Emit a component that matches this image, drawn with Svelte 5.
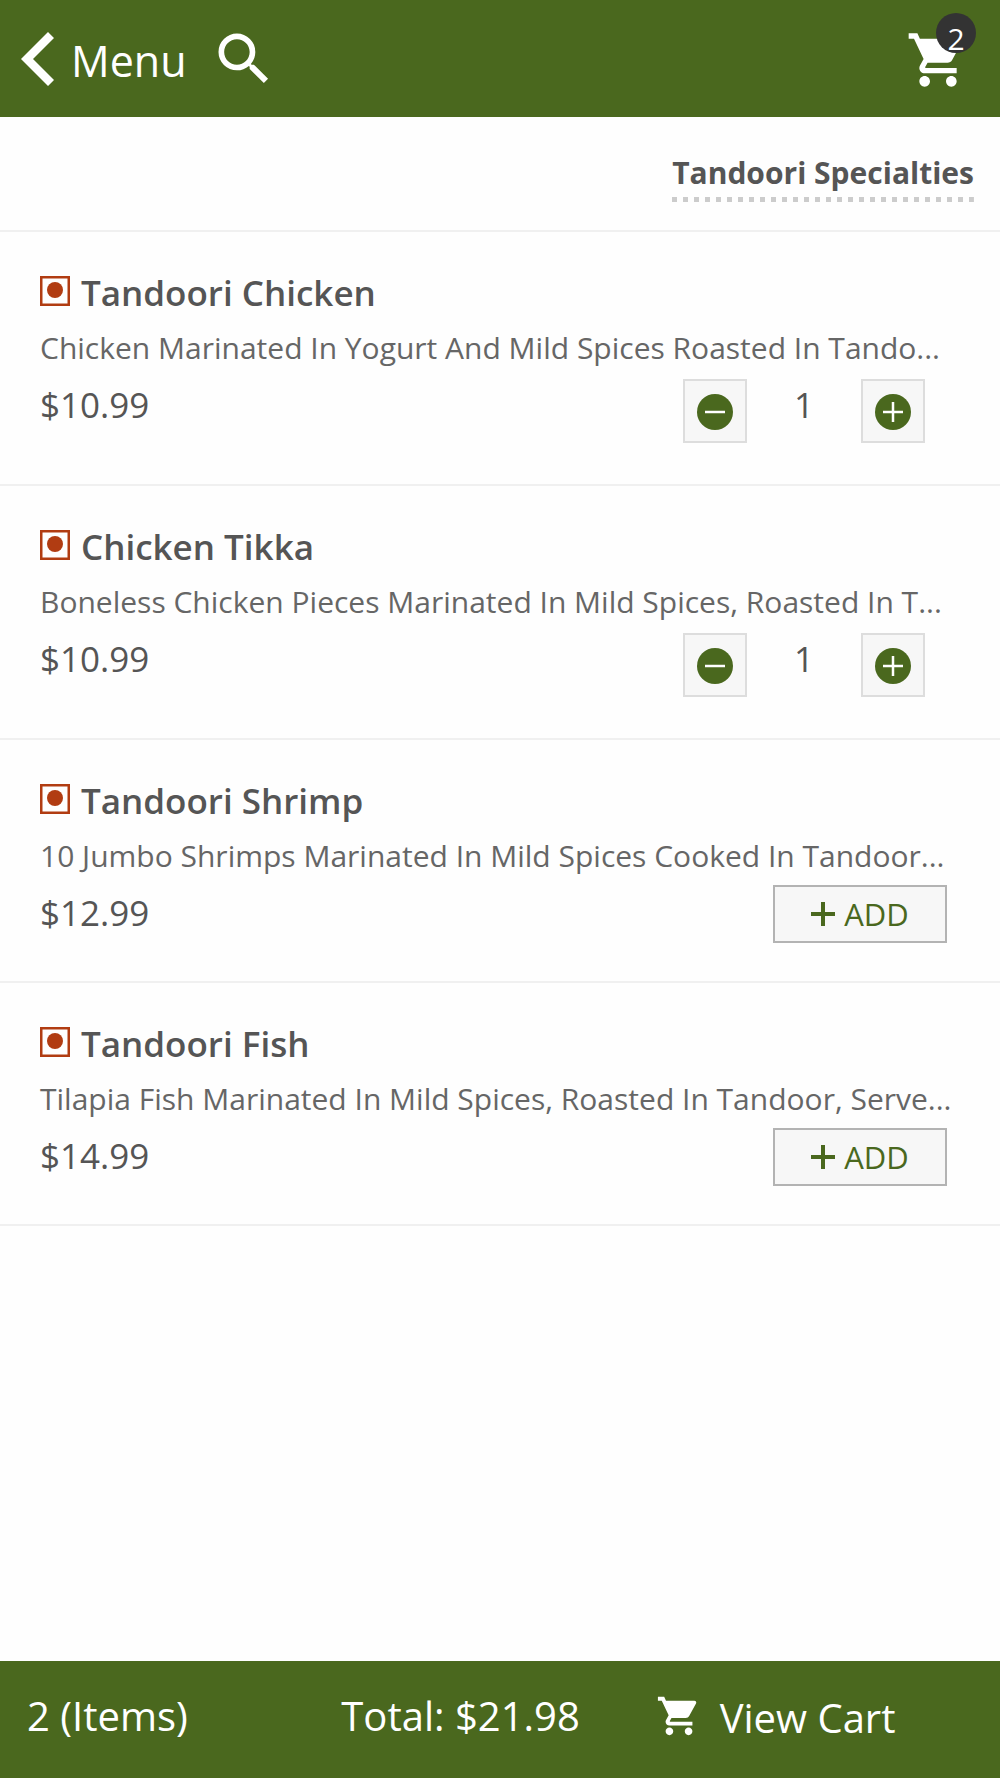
<script lang="ts">
	type Item = { name: string; description: string; price: number; quantity: number };

	let items = $state<Item[]>([
		{
			name: 'Tandoori Chicken',
			description: 'Chicken Marinated In Yogurt And Mild Spices Roasted In Tando...',
			price: 10.99,
			quantity: 1
		},
		{
			name: 'Chicken Tikka',
			description: 'Boneless Chicken Pieces Marinated In Mild Spices, Roasted In T...',
			price: 10.99,
			quantity: 1
		},
		{
			name: 'Tandoori Shrimp',
			description: '10 Jumbo Shrimps Marinated In Mild Spices Cooked In Tandoor...',
			price: 12.99,
			quantity: 0
		},
		{
			name: 'Tandoori Fish',
			description: 'Tilapia Fish Marinated In Mild Spices, Roasted In Tandoor, Serve...',
			price: 14.99,
			quantity: 0
		}
	]);

	let count = $derived(items.reduce((sum, item) => sum + item.quantity, 0));
	let total = $derived(items.reduce((sum, item) => sum + item.quantity * item.price, 0));
</script>

{#snippet cartIcon()}
	<svg class="cart-icon" viewBox="0 0 24 24" fill="currentColor" aria-hidden="true">
		<path
			d="M7 18c-1.1 0-1.99.9-1.99 2S5.9 22 7 22s2-.9 2-2-.9-2-2-2zM1 2v2h2l3.6 7.59-1.35 2.45c-.16.28-.25.61-.25.96 0 1.1.9 2 2 2h12v-2H7.42c-.14 0-.25-.11-.25-.25l.03-.12.9-1.63h7.45c.75 0 1.41-.41 1.75-1.03l3.58-6.49A1 1 0 0 0 20 4H5.21l-.94-2H1zm16 16c-1.1 0-1.99.9-1.99 2s.89 2 1.99 2 2-.9 2-2-.9-2-2-2z"
		/>
	</svg>
{/snippet}

<div class="page">
	<header>
		<a class="back" href="#menu">
			<svg viewBox="0 0 33 54" fill="currentColor" aria-hidden="true">
				<path d="M27 0l6 6-21 21 21 21-6 6L0 27z" />
			</svg>
			<span>Menu</span>
		</a>
		<button class="search" aria-label="Search">
			<svg viewBox="0 0 24 24" fill="currentColor" aria-hidden="true">
				<path
					d="M15.5 14h-.79l-.28-.27A6.47 6.47 0 0 0 16 9.5 6.5 6.5 0 1 0 9.5 16c1.61 0 3.09-.59 4.23-1.57l.27.28v.79l5 4.99L20.49 19l-4.99-5zm-6 0C7.01 14 5 11.99 5 9.5S7.01 5 9.5 5 14 7.01 14 9.5 11.99 14 9.5 14z"
				/>
			</svg>
		</button>
		<a class="cart" href="#cart" aria-label="Cart">
			{@render cartIcon()}
			<span class="badge">{count}</span>
		</a>
	</header>

	<main>
		<div class="category">
			<h1>Tandoori Specialties</h1>
		</div>

		{#each items as item}
			<section class="item">
				<h2>
					<svg class="mark" viewBox="0 0 30 30" aria-hidden="true">
						<rect x="1.25" y="1.25" width="27.5" height="27.5" />
						<circle cx="15" cy="14" r="8" />
					</svg>
					{item.name}
				</h2>
				<p class="description">{item.description}</p>
				<div class="order">
					<span class="price">${item.price.toFixed(2)}</span>
					{#if item.quantity > 0}
						<div class="stepper">
							<button aria-label="Remove one {item.name}" onclick={() => item.quantity--}>
								<svg viewBox="0 0 36 36" aria-hidden="true">
									<circle cx="18" cy="18" r="18" />
									<path d="M8 18h20" />
								</svg>
							</button>
							<span class="quantity">{item.quantity}</span>
							<button aria-label="Add one {item.name}" onclick={() => item.quantity++}>
								<svg viewBox="0 0 36 36" aria-hidden="true">
									<circle cx="18" cy="18" r="18" />
									<path d="M8 18h20M18 8v20" />
								</svg>
							</button>
						</div>
					{:else}
						<button class="add" onclick={() => item.quantity++}>
							<svg viewBox="0 0 24 24" aria-hidden="true">
								<path d="M0 12h24M12 0v24" />
							</svg>
							ADD
						</button>
					{/if}
				</div>
			</section>
		{/each}
	</main>

	<footer>
		<span>{count} (Items)</span>
		<span>Total: ${total.toFixed(2)}</span>
		<a class="view-cart" href="#cart">
			{@render cartIcon()}
			<span>View Cart</span>
		</a>
	</footer>
</div>

<style>
	:global(body) {
		margin: 0;
		background: #fefefe;
	}

	.page {
		display: flex;
		flex-direction: column;
		min-height: 100vh;
		font-family: 'Open Sans', 'Noto Sans', sans-serif;
		color: #555;
	}

	button {
		box-sizing: border-box;
		padding: 0;
		font: inherit;
		cursor: pointer;
	}

	a {
		color: inherit;
		text-decoration: none;
	}

	svg {
		display: block;
		flex: none;
	}

	header {
		display: flex;
		align-items: center;
		box-sizing: border-box;
		height: 117px;
		padding: 0 30px 0 21px;
		background: #4a681e;
		color: #fff;
	}

	.back {
		display: flex;
		align-items: center;
		gap: 17px;
		font-size: 43px;
		line-height: 54px;
	}

	.back span {
		padding-top: 4px;
	}

	.back svg {
		width: 33px;
		height: 54px;
	}

	.search {
		margin-left: 23px;
		border: 0;
		background: none;
		color: inherit;
	}

	.search svg {
		width: 68px;
		height: 68px;
	}

	.cart {
		position: relative;
		margin-left: auto;
		padding-top: 2px;
	}

	.cart .cart-icon {
		width: 64px;
		height: 64px;
	}

	.badge {
		position: absolute;
		top: -13px;
		right: -6px;
		box-sizing: border-box;
		width: 40px;
		height: 40px;
		padding-top: 12px;
		border-radius: 50%;
		background: #333;
		font-size: 30px;
		line-height: 28px;
		text-align: center;
	}

	main {
		flex: 1;
	}

	.category {
		display: flex;
		justify-content: flex-end;
		padding: 34px 26px 28px;
		border-bottom: 2px solid #f0f0f0;
	}

	/* square dots, a dotted border would draw round ones */
	h1 {
		margin: 0;
		padding-bottom: 7px;
		background: repeating-linear-gradient(90deg, #ccc 0 5px, transparent 5px 11px) bottom / 100% 5px
			no-repeat;
		font-size: 30px;
		font-weight: 700;
		line-height: 44px;
	}

	.item {
		padding: 35px 26px 38px 40px;
		border-bottom: 2px solid #f0f0f0;
	}

	h2 {
		display: flex;
		align-items: center;
		gap: 11px;
		margin: 0;
		font-size: 35px;
		font-weight: 600;
		line-height: 52px;
	}

	.mark {
		width: 30px;
		height: 30px;
		margin-bottom: 4px;
		fill: #b13c12;
	}

	.mark rect {
		fill: none;
		stroke: #b13c12;
		stroke-width: 2.5;
	}

	.description {
		margin: 0;
		font-size: 30px;
		line-height: 58px;
		white-space: nowrap;
		color: #666;
	}

	.order {
		display: flex;
		align-items: flex-start;
		justify-content: space-between;
	}

	.price,
	.quantity {
		font-size: 35px;
		line-height: 56px;
	}

	.stepper {
		display: flex;
		align-items: flex-start;
		padding-right: 49px;
	}

	.quantity {
		width: 114px;
		text-align: center;
	}

	.stepper button {
		display: flex;
		align-items: center;
		justify-content: center;
		width: 64px;
		height: 64px;
		margin: 2px 0 3px;
		padding-top: 2px;
		border: 2px solid #ddd;
		background: #f7f7f7;
	}

	.stepper svg {
		width: 36px;
		height: 36px;
		fill: #4a681e;
		stroke-width: 2.5;
	}

	.stepper path {
		stroke: #fff;
	}

	.add {
		display: flex;
		align-items: center;
		justify-content: center;
		gap: 9px;
		width: 174px;
		height: 58px;
		margin-right: 27px;
		border: 2px solid #b3b3b3;
		background: #f7f7f7;
		font-size: 31px;
		color: #4a681e;
	}

	.add svg {
		width: 24px;
		height: 24px;
		stroke: #4a681e;
		stroke-width: 4;
	}

	footer {
		display: grid;
		grid-template-columns: repeat(3, 1fr);
		align-items: center;
		box-sizing: border-box;
		height: 117px;
		padding: 0 30px 8px 27px;
		background: #4a681e;
		font-size: 40px;
		white-space: nowrap;
		color: #fff;
	}

	.view-cart {
		display: flex;
		align-items: center;
		gap: 18px;
	}

	.view-cart span {
		padding-top: 4px;
	}

	.view-cart .cart-icon {
		width: 46px;
		height: 46px;
	}
</style>
